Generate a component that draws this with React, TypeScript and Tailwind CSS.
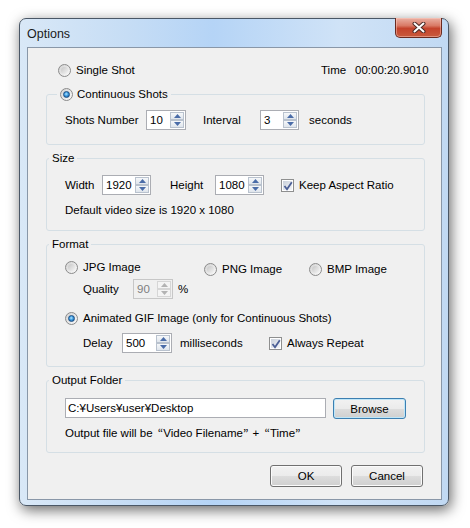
import React from "react";

const Radio = ({ checked = false }: { checked?: boolean }) => (
  <span className="inline-flex h-[13px] w-[13px] shrink-0 items-center justify-center rounded-full border border-[#8b8b8b] bg-[linear-gradient(135deg,#d2d2d2,#fbfbfb)]">
    {checked ? (
      <span className="h-[7px] w-[7px] rounded-full border border-[#1c4f85] bg-[radial-gradient(circle_at_45%_40%,#b4e6ff_0%,#3d9be0_45%,#0d4a8c_100%)]" />
    ) : (
      <span className="h-[7px] w-[7px] rounded-full bg-[linear-gradient(135deg,#c6c6c6,#f4f4f4)]" />
    )}
  </span>
);

const Check = () => (
  <span className="relative inline-flex h-[13px] w-[13px] shrink-0 items-center justify-center border border-[#8e8f8f] bg-white">
    <span className="h-[9px] w-[9px] bg-[linear-gradient(135deg,#c9d0da,#f3f5f8)]" />
    <svg className="absolute left-[1px] top-[1px]" width="10" height="10" viewBox="0 0 10 10">
      <path d="M1.5 5 L4 8.3 L8.8 1.2" stroke="#4b5f95" strokeWidth="1.8" fill="none" />
    </svg>
  </span>
);

const SpinBtn = ({ up = false, disabled = false }: { up?: boolean; disabled?: boolean }) => (
  <div
    className={`flex flex-1 items-center justify-center border ${
      disabled
        ? "border-[#d6d6d6] bg-[#f4f4f4]"
        : "border-[#b9c2ce] bg-[linear-gradient(#f6f8fa,#dfe5ec)]"
    }`}
  >
    <svg width="7" height="4" viewBox="0 0 7 4">
      <polygon
        points={up ? "0,4 3.5,0 7,4" : "0,0 3.5,4 7,0"}
        fill={disabled ? "#b3b3b3" : "#4a6ca8"}
      />
    </svg>
  </div>
);

const Spin = ({
  value,
  className,
  disabled = false,
}: {
  value: string;
  className: string;
  disabled?: boolean;
}) => (
  <div
    className={`flex h-[20px] shrink-0 border ${
      disabled ? "border-[#c7c7c7] bg-[#f0f0f0] text-[#7e7e7e]" : "border-[#abadb3] bg-white text-black"
    } ${className}`}
  >
    <span className="flex-1 pl-[3px] leading-[18px]">{value}</span>
    <div className="my-[1px] mr-[1px] flex w-[14px] flex-col">
      <SpinBtn up disabled={disabled} />
      <SpinBtn disabled={disabled} />
    </div>
  </div>
);

const Btn = ({
  children,
  className,
  focus = false,
}: {
  children: React.ReactNode;
  className: string;
  focus?: boolean;
}) => (
  <div
    className={`flex items-center justify-center rounded-[3px] border ${
      focus ? "border-[#3c7fb1] shadow-[inset_0_0_0_1px_#bfe6f8]" : "border-[#707070] shadow-[inset_0_0_0_1px_#fbfbfb]"
    } bg-[linear-gradient(#f2f2f2_0%,#ebebeb_50%,#dddddd_51%,#cfcfcf_100%)] ${className}`}
  >
    {children}
  </div>
);

const QO = () => <span className="pl-[2px] font-['Noto_Sans_CJK_JP',sans-serif]">“</span>;
const QC = () => <span className="pr-[1px] font-['Noto_Sans_CJK_JP',sans-serif]">”</span>;

export default function App() {
  return (
    <div className="min-h-[528px] bg-white pl-[19px] pt-[18px] font-['Liberation_Sans',Arial,sans-serif] text-[11.5px] leading-[16px] text-black">
      <div className="flex h-[488px] w-[430px] flex-col rounded-[7px] border border-[#4a5766] bg-[linear-gradient(90deg,#d9e8f7_0%,#c6ddf5_25%,#b5d4f6_45%,#d0e3f7_75%,#c1d9f3_100%)] pb-[5px] pl-[7px] pr-[6px] shadow-[2px_4px_14px_rgba(0,0,0,0.6)]">
        {/* title bar */}
        <div className="flex h-[28px] shrink-0 justify-between">
          <span className="self-center pt-[1px] text-[12.5px] text-[#1b1b1b]">Options</span>
          <div className="-mt-px flex h-[20px] w-[47px] items-center justify-center rounded-b-[5px] border border-t-0 border-[#6a2a20] bg-[linear-gradient(#eab0a3_0%,#d97a66_40%,#c4432c_55%,#c95a3d_100%)] shadow-[inset_0_0_0_1px_rgba(255,210,200,0.45)]">
            <svg width="14" height="11" viewBox="0 0 14 11">
              <path d="M2.5 1.5 L11.5 9.5 M11.5 1.5 L2.5 9.5" stroke="#4a2a26" strokeWidth="4" strokeLinecap="round" />
              <path d="M2.5 1.5 L11.5 9.5 M11.5 1.5 L2.5 9.5" stroke="#ffffff" strokeWidth="2" strokeLinecap="round" />
            </svg>
          </div>
        </div>

        {/* client */}
        <div className="flex flex-1 flex-col border border-[#8997a8] bg-[#f0f0f0]">
          {/* single shot row */}
          <div className="mt-[14px] flex h-[16px] items-center pl-[30px] pr-[21px]">
            <Radio />
            <span className="ml-[5px]">Single Shot</span>
            <div className="ml-auto flex">
              <span className="w-[34px]">Time</span>
              <span className="w-[65px]">00:00:20.9010</span>
            </div>
          </div>

          {/* Continuous */}
          <fieldset className="ml-[18px] mt-[8px] w-[379px] rounded-[3px] border border-[#d5dfe5]">
            <legend className="ml-[10px] px-[3px]">
              <span className="flex h-[16px] items-center">
                <Radio checked />
                <span className="ml-[4px]">Continuous Shots</span>
              </span>
            </legend>
            <div className="flex items-center pb-[14px] pl-[18px] pt-[8px]">
              <span className="w-[81px]">Shots Number</span>
              <Spin value="10" className="w-[40px]" />
              <span className="ml-[17px] w-[57px]">Interval</span>
              <Spin value="3" className="w-[39px]" />
              <span className="ml-[10px]">seconds</span>
            </div>
          </fieldset>

          {/* Size */}
          <fieldset className="ml-[18px] mt-[5px] w-[379px] rounded-[3px] border border-[#d5dfe5]">
            <legend className="ml-[2px] px-[3px]">
              <span className="block h-[16px]">Size</span>
            </legend>
            <div className="flex flex-col pb-[12px] pl-[18px] pt-[9px]">
              <div className="flex items-center">
                <span className="w-[37px]">Width</span>
                <Spin value="1920" className="w-[49px]" />
                <span className="ml-[19px] w-[45px]">Height</span>
                <Spin value="1080" className="w-[49px]" />
                <span className="ml-[17px] flex items-center">
                  <Check />
                  <span className="ml-[5px]">Keep Aspect Ratio</span>
                </span>
              </div>
              <div className="mt-[7px] h-[16px]">Default video size is 1920 x 1080</div>
            </div>
          </fieldset>

          {/* Format */}
          <fieldset className="ml-[18px] mt-[5px] w-[379px] rounded-[3px] border border-[#d5dfe5]">
            <legend className="ml-[2px] px-[3px]">
              <span className="block h-[16px]">Format</span>
            </legend>
            <div className="flex flex-col pb-[13px] pl-[18px] pt-[7px]">
              <div className="flex items-start">
                <div className="flex w-[139px] flex-col">
                  <div className="flex h-[16px] items-center">
                    <Radio />
                    <span className="ml-[5px]">JPG Image</span>
                  </div>
                  <div className="ml-[18px] mt-[4px] flex items-center">
                    <span className="w-[50px]">Quality</span>
                    <Spin value="90" className="w-[40px]" disabled />
                    <span className="ml-[5px]">%</span>
                  </div>
                </div>
                <div className="mt-[2px] flex h-[16px] w-[105px] items-center">
                  <Radio />
                  <span className="ml-[5px]">PNG Image</span>
                </div>
                <div className="mt-[2px] flex h-[16px] items-center">
                  <Radio />
                  <span className="ml-[5px]">BMP Image</span>
                </div>
              </div>
              <div className="mt-[11px] flex h-[16px] items-center">
                <Radio checked />
                <span className="ml-[5px]">Animated GIF Image (only for Continuous Shots)</span>
              </div>
              <div className="ml-[18px] mt-[7px] flex items-center">
                <span className="w-[39px]">Delay</span>
                <Spin value="500" className="w-[50px]" />
                <span className="ml-[8px] w-[89px]">milliseconds</span>
                <Check />
                <span className="ml-[5px]">Always Repeat</span>
              </div>
            </div>
          </fieldset>

          {/* Output Folder */}
          <fieldset className="ml-[18px] mt-[5px] w-[379px] rounded-[3px] border border-[#d5dfe5]">
            <legend className="ml-[2px] px-[3px]">
              <span className="block h-[16px]">Output Folder</span>
            </legend>
            <div className="flex flex-col pb-[11px] pl-[18px] pt-[10px]">
              <div className="flex items-start">
                <div className="flex h-[20px] w-[261px] items-center border border-[#abadb3] bg-white pl-[2px]">
                  C:¥Users¥user¥Desktop
                </div>
                <Btn className="ml-[7px] h-[21px] w-[73px]" focus>
                  Browse
                </Btn>
              </div>
              <div className="mt-[6px] flex h-[16px] items-center whitespace-pre">
                Output file will be <QO />Video Filename<QC /> + <QO />Time<QC />
              </div>
            </div>
          </fieldset>

          {/* buttons */}
          <div className="mt-[12px] flex justify-end gap-[9px] pr-[18px]">
            <Btn className="h-[22px] w-[72px]">OK</Btn>
            <Btn className="h-[22px] w-[72px]">Cancel</Btn>
          </div>
        </div>
      </div>
    </div>
  );
}
